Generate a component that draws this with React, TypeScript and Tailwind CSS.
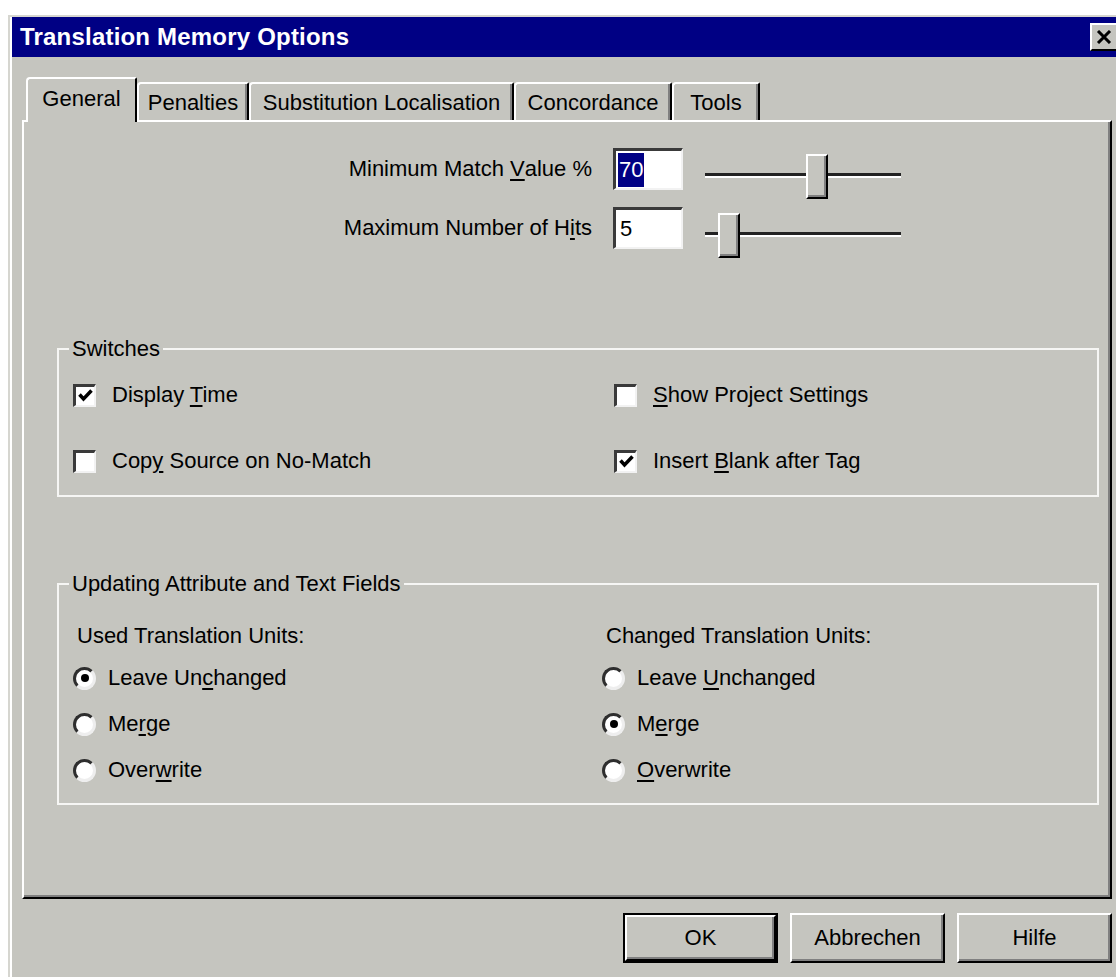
import React from 'react';

const FACE = 'bg-[#c5c5bf]';

type Accel = { text: string; at?: number };

// Renders a label with one underlined accelerator letter
const Label = ({ text, at }: Accel) => {
  if (at === undefined) return <>{text}</>;
  return (
    <>
      {text.slice(0, at)}
      <u className="underline-offset-[3px] decoration-2">{text[at]}</u>
      {text.slice(at + 1)}
    </>
  );
};

const CheckBox = ({ checked }: { checked: boolean }) => (
  <span className="w-[23px] h-[23px] shrink-0 bg-white border-t-[3px] border-l-[3px] border-b-2 border-r-2 border-t-[#3a3a3a] border-l-[#3a3a3a] border-b-[#f2f2f2] border-r-[#f2f2f2] flex items-center justify-center">
    {checked && (
      <svg width="15" height="13" viewBox="0 0 15 13">
        <path d="M1.5 5.5 L5.5 10 L13.5 1.5" stroke="#000" strokeWidth="3.5" fill="none" />
      </svg>
    )}
  </span>
);

const Radio = ({ checked }: { checked: boolean }) => (
  <span className="w-[23px] h-[23px] shrink-0 rounded-full bg-white border-[3px] border-t-[#2e2e2e] border-l-[#2e2e2e] border-b-[#eeeeee] border-r-[#eeeeee] flex items-center justify-center">
    {checked && <span className="w-[8px] h-[8px] rounded-full bg-black" />}
  </span>
);

const Slider = ({ pos }: { pos: string }) => (
  <div className="relative w-[196px] h-[45px] mt-[6px] ml-[22px]">
    <div className="absolute left-0 right-0 top-[19px] h-[3px] bg-[#222]" />
    <div className="absolute left-0 right-0 top-[22px] h-[2px] bg-white" />
    <div
      className={`absolute top-0 ${pos} w-[22px] h-[45px] ${FACE} border-t-2 border-l-2 border-white border-r-2 border-b-2 border-r-black border-b-black shadow-[inset_-2px_-2px_0_#808080]`}
    />
  </div>
);

const Button = ({ children, isDefault }: { children: React.ReactNode; isDefault?: boolean }) => (
  <div className={`w-[155px] h-[50px] ${isDefault ? 'border-2 border-black' : ''}`}>
    <div className="h-full w-full border-t-2 border-l-2 border-white border-r-2 border-b-2 border-r-black border-b-black shadow-[inset_-2px_-2px_0_#808080] flex items-center justify-center text-[22px]">
      {children}
    </div>
  </div>
);

const tabs = [
  { name: 'General', w: 'w-[111px]' },
  { name: 'Penalties', w: 'w-[112px]' },
  { name: 'Substitution Localisation', w: 'w-[265px]' },
  { name: 'Concordance', w: 'w-[158px]' },
  { name: 'Tools', w: 'w-[88px]' },
];

const switches: { label: Accel; checked: boolean }[] = [
  { label: { text: 'Display Time', at: 8 }, checked: true },
  { label: { text: 'Show Project Settings', at: 0 }, checked: false },
  { label: { text: 'Copy Source on No-Match', at: 3 }, checked: false },
  { label: { text: 'Insert Blank after Tag', at: 7 }, checked: true },
];

const usedUnits: { label: Accel; checked: boolean }[] = [
  { label: { text: 'Leave Unchanged', at: 8 }, checked: true },
  { label: { text: 'Merge', at: 2 }, checked: false },
  { label: { text: 'Overwrite', at: 4 }, checked: false },
];

const changedUnits: { label: Accel; checked: boolean }[] = [
  { label: { text: 'Leave Unchanged', at: 6 }, checked: false },
  { label: { text: 'Merge', at: 1 }, checked: true },
  { label: { text: 'Overwrite', at: 0 }, checked: false },
];

const RadioColumn = ({ title, items }: { title: string; items: { label: Accel; checked: boolean }[] }) => (
  <div className="flex flex-col">
    <div className="h-[30px] flex items-center pl-[4px] mb-[12px]">{title}</div>
    <div className="flex flex-col gap-[16px]">
      {items.map((it) => (
        <div key={it.label.text} className="h-[30px] flex items-center gap-[12px]">
          <Radio checked={it.checked} />
          <span>
            <Label text={it.label.text} at={it.label.at} />
          </span>
        </div>
      ))}
    </div>
  </div>
);

const fieldBox =
  'bg-white border-t-[3px] border-l-[3px] border-b-2 border-r-2 border-t-[#3a3a3a] border-l-[#3a3a3a] border-b-[#f2f2f2] border-r-[#f2f2f2]';

export default function App() {
  return (
    <div className="w-[1116px] h-[977px] bg-white overflow-hidden font-['Liberation_Sans',Arial,sans-serif] text-black text-[22px] leading-none">
      <div className={`ml-[8px] mt-[15px] w-[1112px] h-[970px] ${FACE} border-t-2 border-l-2 border-[#d6d6d0]`}>
        <div className="h-full border-l-2 border-white">
          {/* Title bar */}
          <div className="h-[40px] bg-[#000084] flex items-center justify-between pl-[8px] pr-[2px]">
            <span className="text-white font-bold text-[24px] tracking-[0.2px]">Translation Memory Options</span>
            <div className={`w-[28px] h-[28px] ${FACE} border-t-2 border-l-2 border-white border-r-2 border-b-2 border-r-black border-b-black flex items-center justify-center`}>
              <svg width="16" height="14" viewBox="0 0 16 14">
                <path d="M2 1 L14 13 M14 1 L2 13" stroke="#000" strokeWidth="3" />
              </svg>
            </div>
          </div>

          {/* Tab strip */}
          <div className="flex items-end ml-[14px] mt-[20px] h-[45px] relative z-10 -mb-[2px]">
            {tabs.map((t, i) =>
              i === 0 ? (
                <div
                  key={t.name}
                  className={`${t.w} h-[45px] ${FACE} border-t-2 border-l-2 border-white border-r-2 border-r-black rounded-tl-[4px] rounded-tr-[2px] flex items-center justify-center pb-[4px]`}
                >
                  {t.name}
                </div>
              ) : (
                <div
                  key={t.name}
                  className={`${t.w} h-[38px] mb-[2px] border-t-2 border-l-2 border-white border-r-2 border-r-black rounded-tl-[4px] rounded-tr-[2px] shadow-[inset_-2px_0_0_#808080] flex items-center justify-center pt-[2px]`}
                >
                  {t.name}
                </div>
              ),
            )}
          </div>

          {/* Tab page */}
          <div className="ml-[10px] w-[1090px] h-[779px] border-t-2 border-l-2 border-white border-r-2 border-b-2 border-r-black border-b-black shadow-[inset_-2px_-2px_0_#808080]">
            {/* Match value */}
            <div className="flex items-start mt-[26px]">
              <div className="w-[568px] h-[42px] flex items-center justify-end">
                Minimum Match&nbsp;<Label text="Value" at={0} />&nbsp;%
              </div>
              <div className={`ml-[21px] w-[70px] h-[42px] ${fieldBox} flex items-center pl-[2px]`}>
                <span className="bg-[#000084] text-white px-[1px] py-[6px]">70</span>
              </div>
              <Slider pos="left-[101px]" />
            </div>

            {/* Hits */}
            <div className="flex items-start mt-[8px]">
              <div className="w-[568px] h-[42px] flex items-center justify-end">
                Maximum Number of&nbsp;<Label text="Hits" at={1} />
              </div>
              <div className={`ml-[21px] w-[70px] h-[42px] ${fieldBox} flex items-center pl-[4px]`}>5</div>
              <Slider pos="left-[13px]" />
            </div>

            {/* Switches */}
            <fieldset className="ml-[33px] mr-[11px] mt-[79px] border-2 border-[#f6f6f4] px-[14px] pt-[19px] pb-[19px]">
              <legend className="-ml-[4px] px-[3px] h-[24px] leading-[24px]">Switches</legend>
              <div className="grid grid-cols-[541px_1fr] gap-y-[36px]">
                {switches.map((s) => (
                  <div key={s.label.text} className="h-[30px] flex items-center gap-[16px]">
                    <CheckBox checked={s.checked} />
                    <span>
                      <Label text={s.label.text} at={s.label.at} />
                    </span>
                  </div>
                ))}
              </div>
            </fieldset>

            {/* Update options */}
            <fieldset className="ml-[33px] mr-[11px] mt-[75px] border-2 border-[#f6f6f4] px-[14px] pt-[25px] pb-[18px]">
              <legend className="-ml-[4px] px-[3px] h-[24px] leading-[24px]">Updating Attribute and Text Fields</legend>
              <div className="grid grid-cols-[529px_1fr]">
                <RadioColumn title="Used Translation Units:" items={usedUnits} />
                <RadioColumn title="Changed Translation Units:" items={changedUnits} />
              </div>
            </fieldset>
          </div>

          {/* Dialog buttons */}
          <div className="ml-[10px] w-[1090px] mt-[14px] flex justify-end gap-[12px]">
            <Button isDefault>OK</Button>
            <Button>Abbrechen</Button>
            <Button>Hilfe</Button>
          </div>
        </div>
      </div>
    </div>
  );
}
